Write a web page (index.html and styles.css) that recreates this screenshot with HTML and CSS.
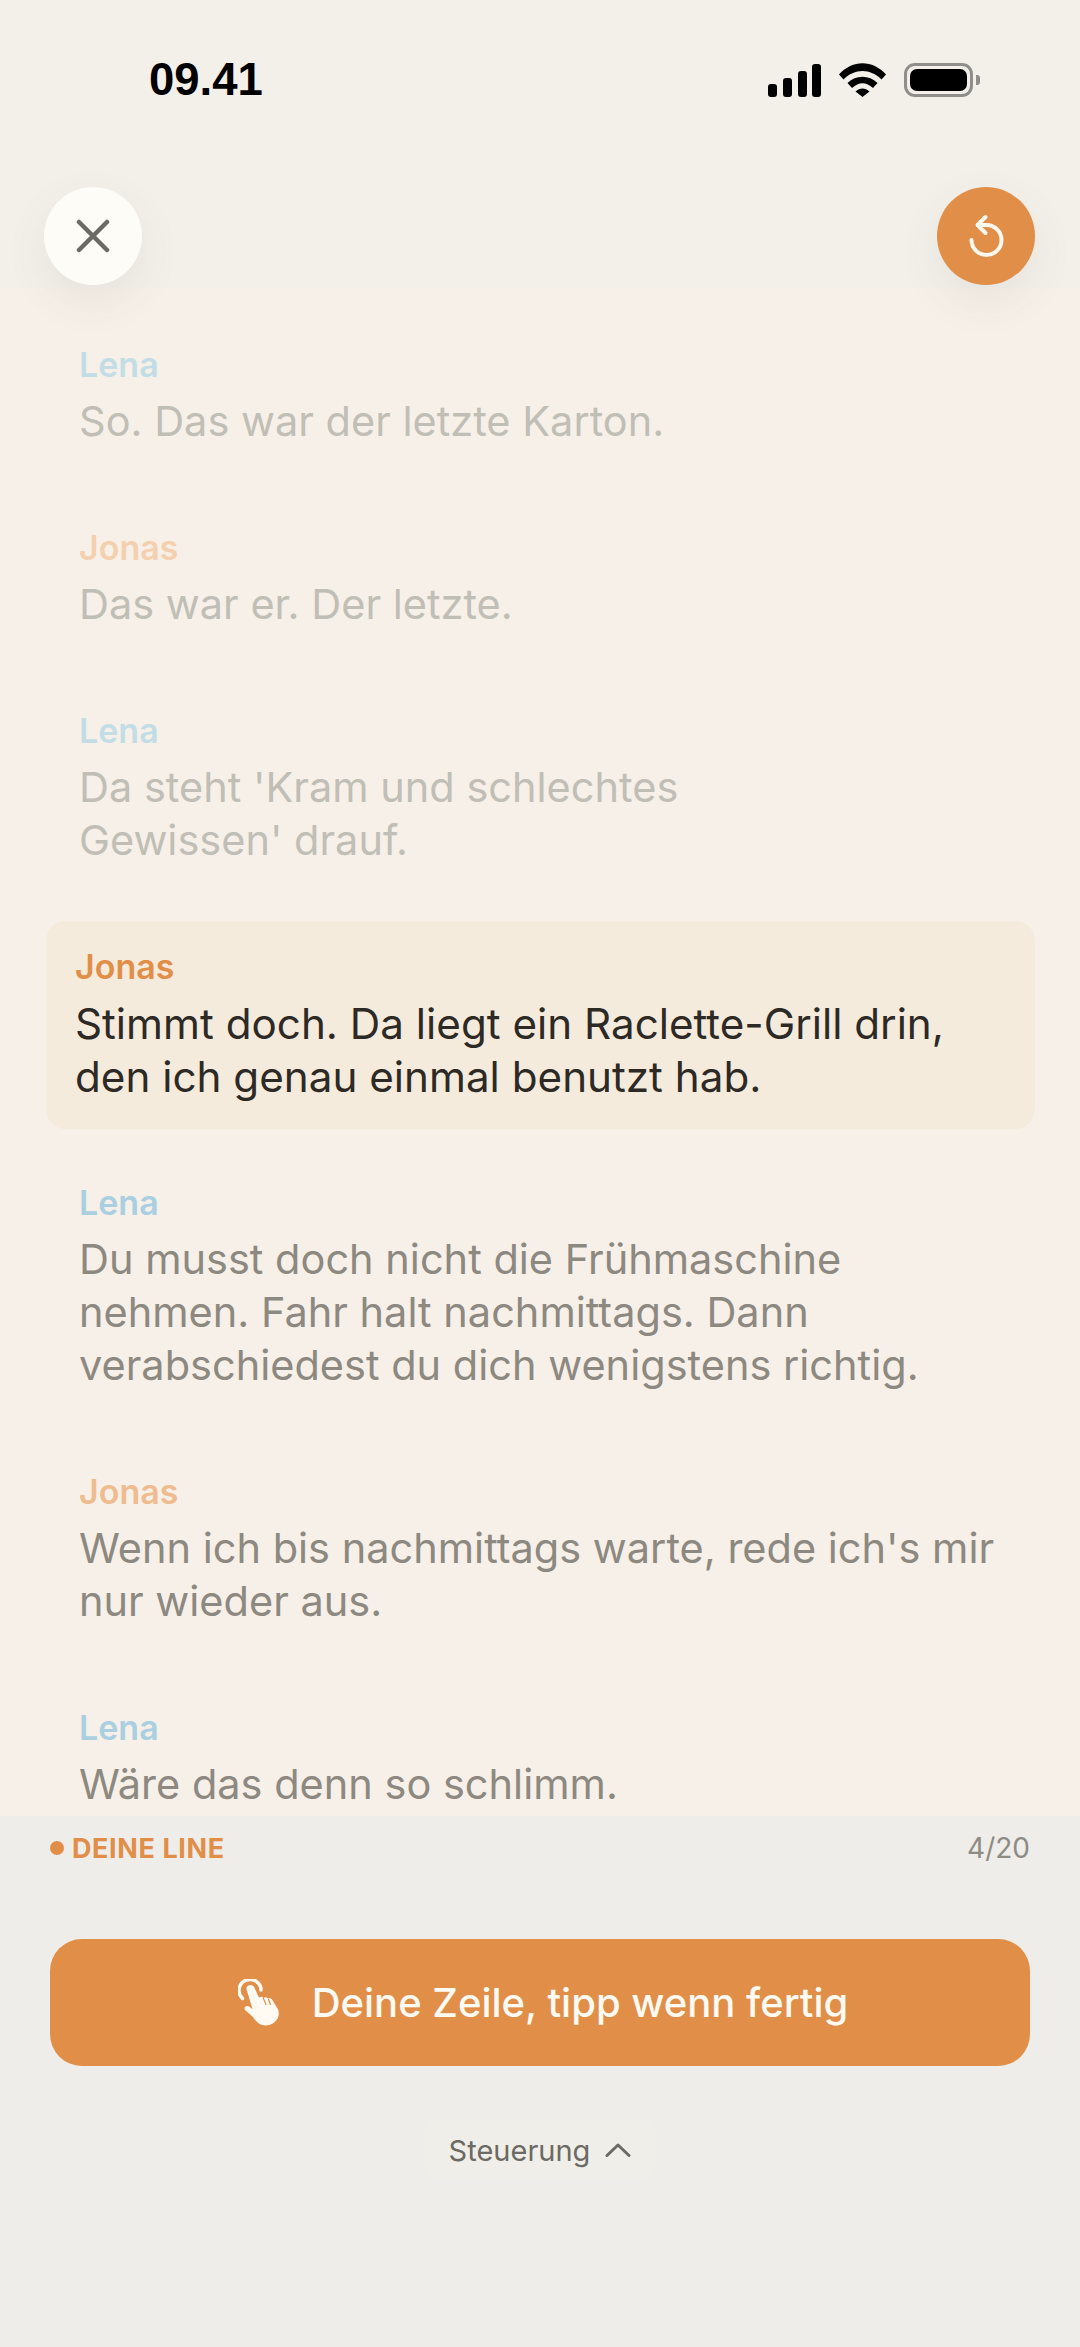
FILE: index.html
```html
<!DOCTYPE html>
<html lang="de">
<head>
    <meta charset="UTF-8">
    <meta name="viewport" content="width=device-width, initial-scale=1.0">
    <title>Deine Line</title>
    <link rel="stylesheet" href="styles.css">
</head>
<body>
    <div class="screen">
        <header class="top">
            <div class="status-bar">
                <span class="time">09.41</span>
                <div class="status-icons">
                    <svg class="icon-signal" width="53" height="33" viewBox="0 0 53 33">
                        <rect x="0" y="20" width="9" height="13" rx="3"/>
                        <rect x="15" y="14" width="9" height="19" rx="3"/>
                        <rect x="30" y="7" width="9" height="26" rx="3"/>
                        <rect x="44" y="0" width="9" height="33" rx="3"/>
                    </svg>
                    <svg class="icon-wifi" width="47" height="34" viewBox="0 0 47 34">
                        <path d="M0 11.5C13.5-3.5 33.5-3.5 47 11.5l-4.5 5C31.5 5 15.5 5 4.500 16.500z"/>
                        <path d="M8.500 20C17 11.500 30 11.500 38.500 20L34 25C27 18.500 20 18.500 13 25z"/>
                        <path d="M16.500 28.500C21 24.500 26 24.500 30.500 28.500L23.500 34z"/>
                    </svg>
                    <div class="battery"><div class="battery-fill"></div></div>
                </div>
            </div>
            <div class="top-actions">
                <button class="round-btn close-btn">
                    <svg width="34" height="34" viewBox="0 0 34 34"><path d="M3 3l28 28M31 3L3 31"/></svg>
                </button>
                <button class="round-btn restart-btn">
                    <svg width="42" height="46" viewBox="0 0 42 46"><path d="M14 12h7.500a15 15 0 1 1-15 15"/><path d="M20.500 4l-8 8 8 8"/></svg>
                </button>
            </div>
        </header>

        <main class="script">
            <div class="line faded">
                <div class="speaker lena">Lena</div>
                <p class="text">So. Das war der letzte Karton.</p>
            </div>
            <div class="line faded">
                <div class="speaker jonas">Jonas</div>
                <p class="text">Das war er. Der letzte.</p>
            </div>
            <div class="line faded">
                <div class="speaker lena">Lena</div>
                <p class="text">Da steht 'Kram und schlechtes<br>Gewissen' drauf.</p>
            </div>
            <div class="line current">
                <div class="speaker jonas">Jonas</div>
                <p class="text">Stimmt doch. Da liegt ein Raclette-Grill drin, den ich genau einmal benutzt hab.</p>
            </div>
            <div class="line">
                <div class="speaker lena">Lena</div>
                <p class="text">Du musst doch nicht die Frühmaschine nehmen. Fahr halt nachmittags. Dann verabschiedest du dich wenigstens richtig.</p>
            </div>
            <div class="line">
                <div class="speaker jonas">Jonas</div>
                <p class="text">Wenn ich bis nachmittags warte, rede ich's mir nur wieder aus.</p>
            </div>
            <div class="line">
                <div class="speaker lena">Lena</div>
                <p class="text">Wäre das denn so schlimm.</p>
            </div>
        </main>

        <footer class="panel">
            <div class="panel-head">
                <div class="your-line"><span class="dot"></span>DEINE LINE</div>
                <div class="progress">4/20</div>
            </div>
            <button class="done-btn">
                <svg class="icon-tap" width="46" height="48" viewBox="0 0 46 48">
                    <path class="tap-ring" d="M4.500 19.500A11 11 0 1 1 23 11"/>
                    <path class="tap-hand" d="M10.500 6.500c2.500-1.200 5-.2 6 2.200l4.500 10c1-1.500 3.500-1.500 4.500.5.800-1.500 3.500-1.500 4.500.5 1.200-1 3.500-.5 4.500 1.500l5.500 9c1.800 5 .5 10-3.500 13-4.500 3.500-10.500 4.200-15 1.800-3-2-5-4.500-6.500-7L7 31c-1.500-2.500 1-5 4-3.500l3.500 2.500L8.700 11c-.6-2-.2-3.500 1.800-4.500z"/>
                    <path class="tap-gaps" d="M25.500 19.500l2.500 6M30.500 20.500l2 5"/>
                </svg>
                <span>Deine Zeile, tipp wenn fertig</span>
            </button>
            <div class="controls-toggle">
                <span>Steuerung</span>
                <svg width="26" height="14" viewBox="0 0 26 14"><path d="M2 12.500L13 2l11 10.500"/></svg>
            </div>
        </footer>
    </div>
</body>
</html>
```

FILE: styles.css
```css
* {
    box-sizing: border-box;
}

html, body {
    margin: 0;
    padding: 0;
}

body {
    font-family: Inter, "Noto Sans", sans-serif;
    background-color: #f6f0e9;
    color: #2d2a26;
}

button {
    font-family: inherit;
    border: none;
    padding: 0;
}

.screen {
    width: 1080px;
    height: 2347px;
    display: flex;
    flex-direction: column;
    overflow: hidden;
}

/* top area */
.top {
    height: 288px;
    flex: none;
    background-color: #f3f0ea;
    position: relative;
    z-index: 1;
}

.status-bar {
    height: 187px;
    padding: 62px 100px 0 149px;
    display: flex;
    justify-content: space-between;
    align-items: flex-start;
}

.time {
    font-family: "Liberation Sans", sans-serif;
    font-weight: 700;
    font-size: 45.5px;
    line-height: 36px;
    color: #000;
}

.status-icons {
    display: flex;
    align-items: center;
    gap: 18px;
    margin-top: 1px;
}

.icon-signal, .icon-wifi {
    fill: #000;
    display: block;
}

.battery {
    width: 69px;
    height: 34px;
    border: 3px solid #8f8e8a;
    border-radius: 11px;
    padding: 3px;
    margin-right: 7px;
    position: relative;
}

.battery::after {
    content: "";
    position: absolute;
    right: -10px;
    top: 9px;
    width: 4px;
    height: 10px;
    background-color: #8f8e8a;
    border-radius: 0 3px 3px 0;
}

.battery-fill {
    height: 100%;
    background-color: #000;
    border-radius: 7px;
}

.top-actions {
    display: flex;
    justify-content: space-between;
    padding: 0 45px 0 44px;
}

.round-btn {
    width: 98px;
    height: 98px;
    border-radius: 50%;
    display: flex;
    align-items: center;
    justify-content: center;
    box-shadow: 0 16px 44px rgba(90, 80, 60, 0.08);
}

.close-btn {
    background-color: #fdfcf7;
}

.close-btn svg path {
    fill: none;
    stroke: #6b6a64;
    stroke-width: 4.5;
    stroke-linecap: round;
}

.restart-btn {
    background-color: #e18e49;
}

.restart-btn svg path {
    fill: none;
    stroke: #fff8ee;
    stroke-width: 4;
    stroke-linecap: round;
    stroke-linejoin: round;
}

/* transcript */
.script {
    flex: 1;
    min-height: 0;
    overflow: hidden;
    padding: 31px 45px 0 46px;
    display: flex;
    flex-direction: column;
    gap: 28.5px;
}

.line {
    flex: none;
    padding: 26px 29px 25.5px 33px;
    border-radius: 20px;
}

.speaker {
    font-size: 34px;
    font-weight: 600;
    line-height: 40px;
    margin-bottom: 10px;
}

.text {
    margin: 0;
    font-size: 41.5px;
    line-height: 53px;
    color: #8d8980;
}

.speaker.lena {
    color: #a9cfe0;
}

.speaker.jonas {
    color: #efbc90;
}

.faded .text {
    color: #c1beb6;
}

.faded .speaker.lena {
    color: #c3dde6;
}

.faded .speaker.jonas {
    color: #f4d0ae;
}

.current {
    background-color: #f5ebdc;
    padding-left: 29px;
}

.current .text {
    font-size: 42.2px;
    color: #2d2a26;
}

.current .speaker.jonas {
    color: #e18e49;
}

/* bottom panel */
.panel {
    height: 531px;
    flex: none;
    background-color: #eeede9;
    padding: 14px 50px 0;
}

.panel-head {
    height: 36px;
    display: flex;
    justify-content: space-between;
    align-items: center;
}

.your-line {
    display: flex;
    align-items: center;
    gap: 8px;
    font-size: 27px;
    font-weight: 700;
    letter-spacing: 0.6px;
    color: #e18e49;
}

.dot {
    width: 14px;
    height: 14px;
    border-radius: 50%;
    background-color: #e18e49;
}

.progress {
    font-size: 28px;
    color: #8d8b84;
}

.done-btn {
    width: 100%;
    height: 127px;
    margin-top: 73px;
    padding-left: 6px;
    border-radius: 32px;
    background-color: #e18e49;
    color: #fffaf2;
    display: flex;
    align-items: center;
    justify-content: center;
    gap: 28px;
    font-size: 40px;
    font-weight: 500;
}

.tap-ring {
    fill: none;
    stroke: #fffaf2;
    stroke-width: 3.5;
    stroke-linecap: round;
}

.tap-hand {
    fill: #fffaf2;
}

.tap-gaps {
    fill: none;
    stroke: #e18e49;
    stroke-width: 1.2;
    stroke-linecap: round;
}

.controls-toggle {
    width: 230px;
    height: 60px;
    margin: 54px auto 0;
    background-color: #f0eee8;
    border-radius: 14px;
    display: flex;
    align-items: center;
    justify-content: center;
    gap: 15px;
    font-size: 29px;
    color: #6b6a64;
}

.controls-toggle svg path {
    fill: none;
    stroke: #6b6a64;
    stroke-width: 3;
    stroke-linecap: round;
    stroke-linejoin: round;
}
```
